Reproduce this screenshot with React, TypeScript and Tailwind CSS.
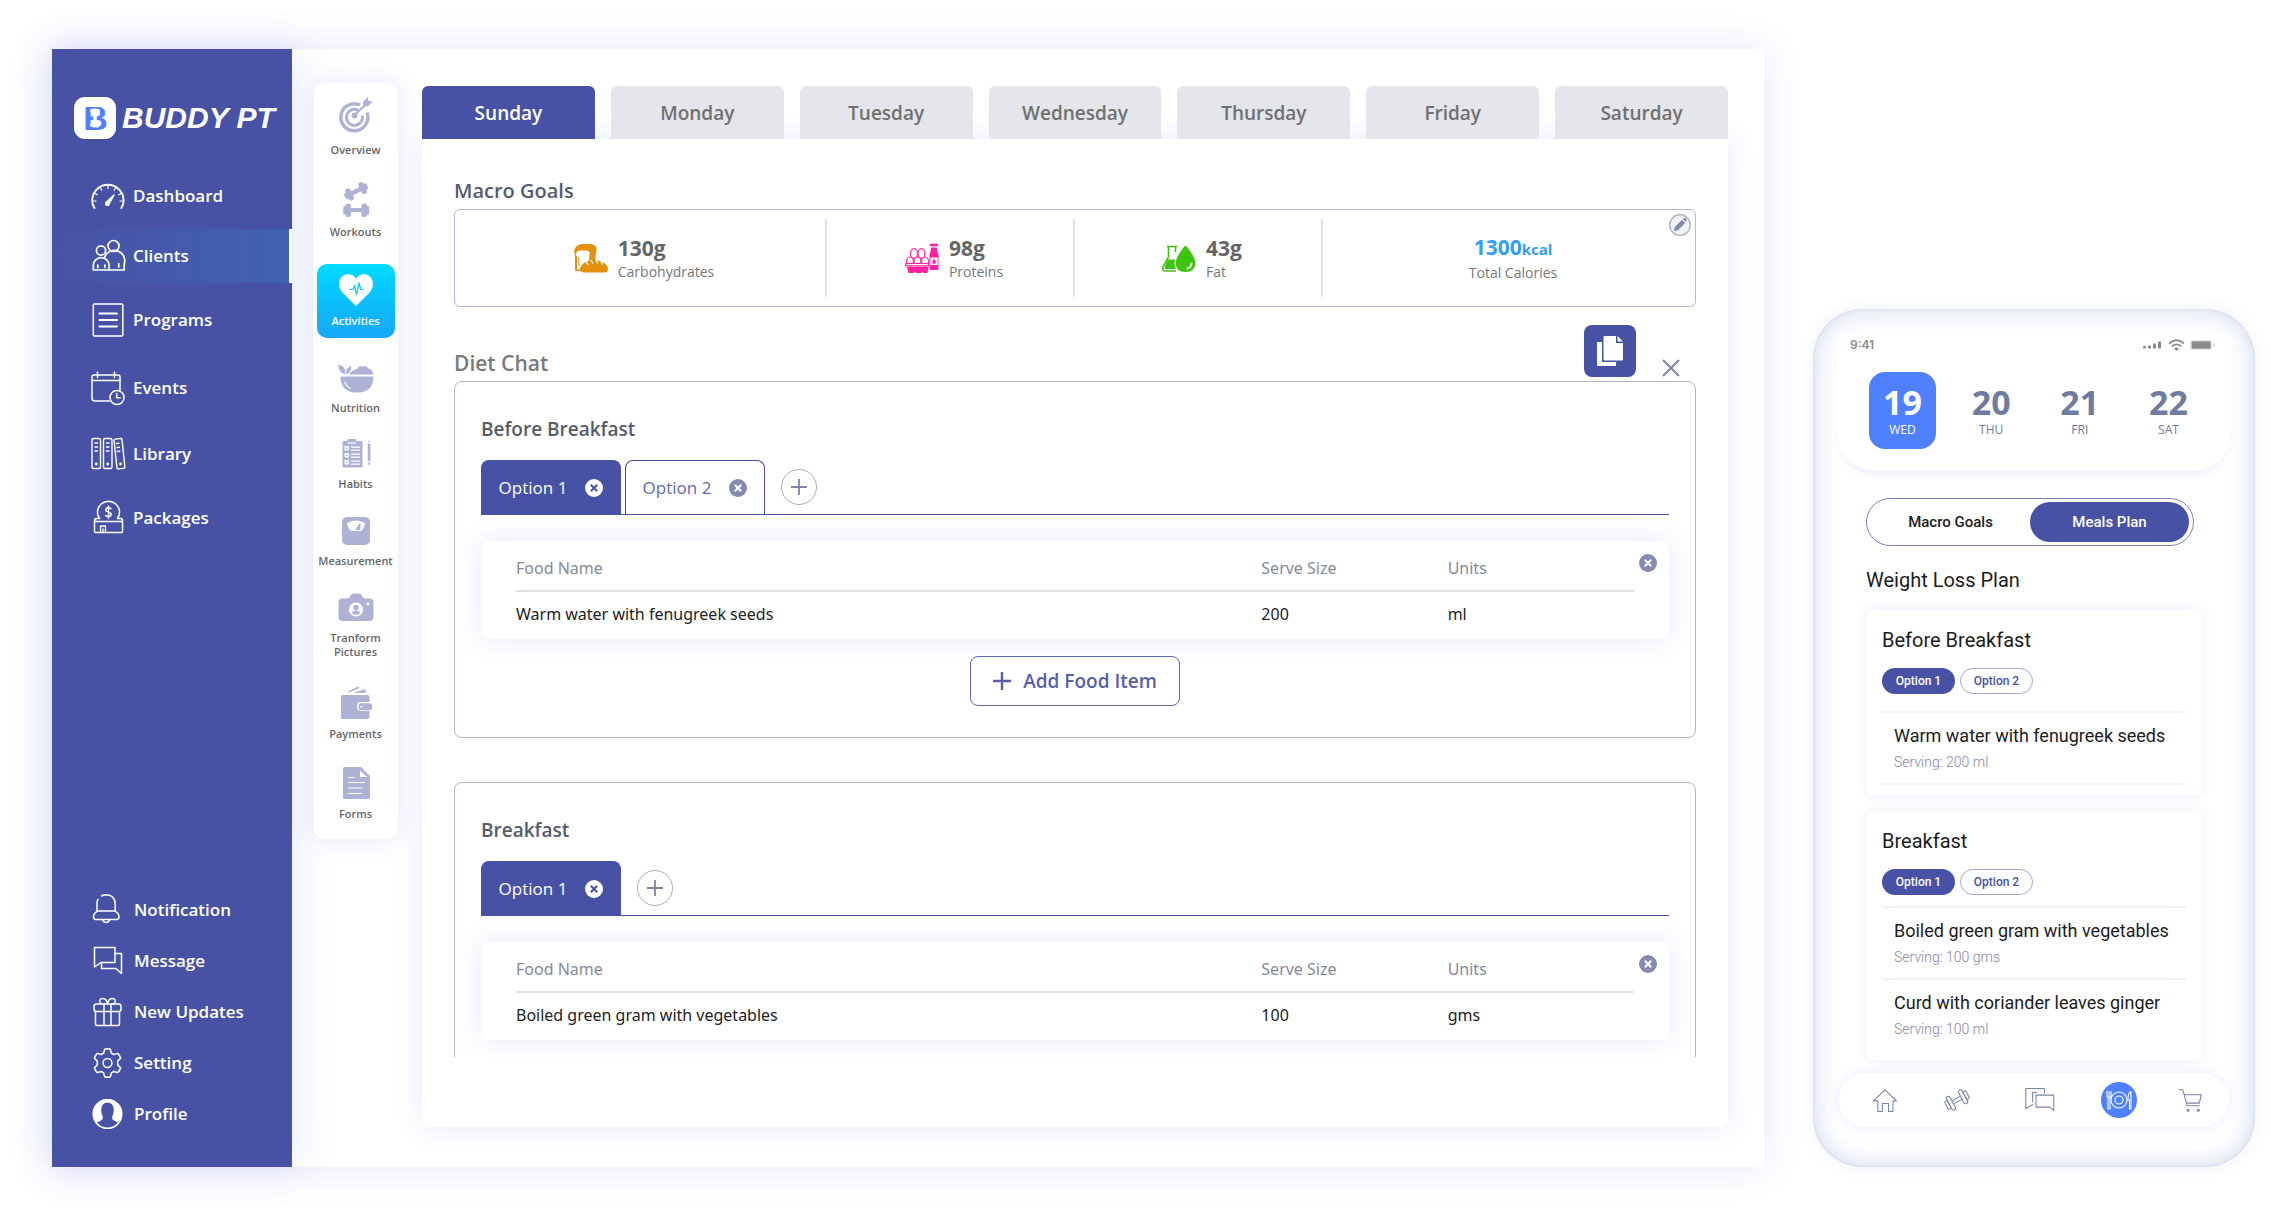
import type { ReactNode } from 'react'
import clsx from 'clsx'

interface IconProps {
  className?: string
}

interface NavItem {
  label: string
  icon: ReactNode
  spacing?: string
  active?: boolean
}

function LineIcon({ children, className = 'h-9 w-9' }: IconProps & { children: ReactNode }) {
  return (
    <svg
      viewBox="0 0 36 36"
      className={clsx('shrink-0', className)}
      fill="none"
      stroke="currentColor"
      strokeWidth="1.5"
      strokeLinecap="round"
      strokeLinejoin="round"
      aria-hidden="true"
    >
      {children}
    </svg>
  )
}

function SolidIcon({ children, className = 'h-9 w-9' }: IconProps & { children: ReactNode }) {
  return (
    <svg viewBox="0 0 36 36" className={clsx('shrink-0 overflow-visible', className)} fill="currentColor" aria-hidden="true">
      {children}
    </svg>
  )
}

function LogoMark() {
  return (
    <svg viewBox="0 0 42 42" className="h-[42px] w-[42px] shrink-0" aria-hidden="true">
      <rect width="42" height="42" rx="11" fill="#fff" />
      <text x="21.500" y="33" textAnchor="middle" className="fill-[#4f80ff] font-['Liberation_Sans',sans-serif] text-[34px] font-bold">
        B
      </text>
      <path
        d="M16 13.500q0-2 5-2t5 2q0 2.300-3.200 2.800v9.400q3.200.5 3.200 2.800t-5 2-5-2q0-2 3.200-2.800v-9.400q-3.200-.5-3.200-2.800z"
        fill="#fff"
      />
    </svg>
  )
}

const mainNav: NavItem[] = [
  {
    label: 'Dashboard',
    icon: (
      <LineIcon>
        <path d="M4.500 30q-2.300-3.500-2.300-7.500a15.700 15.700 0 0 1 31.400 0q0 4-2.300 7.500" strokeWidth="1.900" />
        <path d="M18 8v2.500M10.500 10l1.300 2.200M25.500 10l-1.300 2.200M5 15.500l2.200 1.300M31 15.500l-2.200 1.300M3.500 23H6M32.500 23H30" strokeWidth="1.200" />
        <path d="M16.300 24.200 24 17l-5 9z" fill="currentColor" />
        <circle cx="17.500" cy="25.500" r="1.800" fill="currentColor" />
      </LineIcon>
    ),
  },
  {
    label: 'Clients',
    spacing: 'mt-1.5',
    active: true,
    icon: (
      <LineIcon>
        <g strokeWidth="1.700">
          <circle cx="23.500" cy="8" r="5.500" />
          <circle cx="11" cy="12.500" r="4.600" />
          <path d="M3.300 32v-4.500a7.800 7.800 0 0 1 15.800 0V32z" />
          <path d="M14.500 19.500a10.200 10.200 0 0 1 19.700 6.500v6H19.100" />
          <path d="M7.800 27v2.500M15 27v2.500M28.700 25.500v3.500" />
        </g>
      </LineIcon>
    ),
  },
  {
    label: 'Programs',
    spacing: 'mt-2.5',
    icon: (
      <LineIcon>
        <rect x="3.300" y="2" width="29.500" height="32" rx="1" />
        <path d="M9.500 11.500h17.500M9.500 18h17.500M9.500 24.500h17.500" strokeWidth="1.900" />
      </LineIcon>
    ),
  },
  {
    label: 'Events',
    spacing: 'mt-3.5',
    icon: (
      <LineIcon>
        <path d="M19.500 31H5q-3 0-3-3V7q0-2 2-2h24q2 0 2 2v13" />
        <path d="M2 10.500h28M7.500 2v5.500M24.500 2v5.500" />
        <circle cx="27" cy="27.500" r="7" />
        <path d="M26.700 23.500v4.300h3.500" />
      </LineIcon>
    ),
  },
  {
    label: 'Library',
    spacing: 'mt-3',
    icon: (
      <LineIcon>
        <g strokeWidth="1.400">
          <rect x="2" y="2.500" width="8.500" height="30" rx="1.500" />
          <rect x="13.500" y="2.500" width="8.500" height="30" rx="1.500" />
          <rect x="25.500" y="2.800" width="8" height="30" rx="1.500" transform="rotate(-6 29 18)" />
          <path d="M5 7h2.500M5 11h2.500M5 15h2.500M16.500 7H19M16.500 11H19M16.500 15H19M26.500 7.500l2.500-.3M27 11.500l2.500-.3M27.300 15.500l2.500-.3" />
        </g>
        <circle cx="6.300" cy="28" r="1.400" fill="currentColor" stroke="none" />
        <circle cx="17.800" cy="28" r="1.400" fill="currentColor" stroke="none" />
        <circle cx="30.500" cy="28" r="1.400" fill="currentColor" stroke="none" />
      </LineIcon>
    ),
  },
  {
    label: 'Packages',
    spacing: 'mt-2.5',
    icon: (
      <LineIcon>
        <path d="M9.500 18.500a11 11 0 1 1 18 0" />
        <path d="M4.500 23v-2.500q0-2 2-2h2.500M32.500 23v-2.500q0-2-2-2H28M4.500 21.500h28v10q0 1-1 1h-26q-1 0-1-1z" />
        <path d="M10.500 32.500v-6.500h5v6.500M13 29v3" strokeWidth="1.300" />
        <path d="M21 8.700q-1-1-2.600-1-2.700.2-2.600 2.300.1 1.600 2.700 2.100 2.700.5 2.700 2.400 0 2-2.700 2.200-1.800 0-2.900-1.200M18.500 6v12.500" strokeWidth="1.400" />
      </LineIcon>
    ),
  },
]

const footerNav: NavItem[] = [
  {
    label: 'Notification',
    icon: (
      <LineIcon>
        <path d="M7 19v-8.500q.3-2 1-3.200M11.500 4q2-1.300 4.500-1.300 8.800.3 9.200 9V19" />
        <path d="M7.500 19h17.500l2.300 1.800q2 2.200 1.700 4.500-.4 2.200-2.500 2.200h-20.500q-2.100 0-2.500-2.200-.3-2.300 1.700-4.500zM12.500 28q1.200 2.600 3.600 2.600t3.600-2.600" />
      </LineIcon>
    ),
  },
  {
    label: 'Message',
    icon: (
      <LineIcon>
        <path d="M4.500 4.500h20.500v15H11L4.500 24z" />
        <path d="M25 10.500h6.500v20l-5.500-5H11.500V20" />
      </LineIcon>
    ),
  },
  {
    label: 'New Updates',
    icon: (
      <LineIcon>
        <rect x="4" y="10" width="27" height="7.500" rx="2.500" />
        <path d="M5.500 17.500V30q0 1.500 1.500 1.500h21q1.500 0 1.500-1.500V17.500M14 10v21.500M21 10v21.500" />
        <path d="M17.500 10q-1-5.800-5-5.500-3.500.5-2.700 3.500.5 1.500 2.200 2M17.500 10q1-5.800 5-5.500 3.500.5 2.700 3.500-.5 1.500-2.200 2" />
      </LineIcon>
    ),
  },
  {
    label: 'Setting',
    icon: (
      <LineIcon>
        <circle cx="17.500" cy="18" r="4.400" />
        <path d="M14.700 4.200q2.800-1 5.600 0l1.100 4 2.300 1.300 4-1.100q2.200 1.900 2.900 4.800l-2.900 2.900v3.800l2.900 2.900q-.7 2.900-2.900 4.800l-4-1.100-2.300 1.300-1.100 4q-2.800 1-5.600 0l-1.100-4-2.300-1.300-4 1.100q-2.200-1.900-2.900-4.800l2.900-2.900v-3.800l-2.900-2.900q.7-2.900 2.900-4.800l4 1.100 2.300-1.300z" />
      </LineIcon>
    ),
  },
  {
    label: 'Profile',
    icon: (
      <LineIcon>
        <circle cx="17.500" cy="18" r="14.300" />
        <path
          d="M6.500 26.500q5-1.800 6-3.200.7-1.500-.2-4-1.300-3-1-6.300.6-6.500 6.200-6.500t6.200 6.500q.3 3.300-1 6.300-.9 2.500-.2 4 1 1.400 6 3.200A14.300 14.300 0 1 0 6.500 26.500z"
          fill="currentColor"
          stroke="none"
        />
      </LineIcon>
    ),
  },
]

const railNav: NavItem[] = [
  {
    label: 'Overview',
    icon: (
      <SolidIcon>
        <g fill="none" stroke="currentColor">
          <path d="M22 4a13.500 13.500 0 1 0 7 7.500" strokeWidth="3.400" />
          <path d="M20.500 9.500a8 8 0 1 0 3.700 5" strokeWidth="3" />
          <path d="m16 14.500 14-13" strokeWidth="2" />
        </g>
        <circle cx="16.500" cy="14.500" r="3" />
        <path d="m25 1 4.500-5 1 3.800 4.200 1-5 4.700-4.200-.7z" />
      </SolidIcon>
    ),
  },
  {
    label: 'Workouts',
    spacing: 'mt-[26px]',
    icon: (
      <SolidIcon>
        <g transform="rotate(-26 18 8)">
          <rect x="10" y="6" width="16" height="4.500" />
          <rect x="8" y="2" width="5.500" height="12.500" rx="2.500" />
          <rect x="22.500" y="2" width="5.500" height="12.500" rx="2.500" />
          <rect x="5.500" y="5" width="4" height="6.500" rx="1.500" />
          <rect x="26.500" y="5" width="4" height="6.500" rx="1.500" />
        </g>
        <rect x="12" y="25" width="13" height="4" />
        <rect x="7.500" y="20.500" width="5.500" height="13.500" rx="2.500" />
        <rect x="23.500" y="20.500" width="5.500" height="13.500" rx="2.500" />
        <rect x="5.200" y="23" width="4" height="8.500" rx="1.500" />
        <rect x="27.200" y="23" width="4" height="8.500" rx="1.500" />
      </SolidIcon>
    ),
  },
  {
    label: 'Activities',
    spacing: 'mt-[25px]',
    active: true,
    icon: (
      <SolidIcon>
        <path d="M18 34 4.500 20.500C-1 14 .5 6.500 5.500 3.500 10 1 15.500 2.500 18 6.500 20.500 2.500 26 1 30.500 3.500c5 3 6.500 10.500 1 17z" />
        <path d="M11 17.500h4l1.500-3.500 2 8.500 2.500-11 2 6h2.500" fill="none" stroke="#0cc3fb" strokeWidth="1.200" />
      </SolidIcon>
    ),
  },
  {
    label: 'Nutrition',
    spacing: 'mt-[21px]',
    icon: (
      <SolidIcon>
        <path d="M2.500 17.500h33q0 14-13 16h-7q-13-2-13-16z" />
        <path d="M11 15.500q2.500-4.500 8-5.500 2.500-4.500 5.500-2.500 5-.8 5.500 2 4.500.5 5.500 6z" />
        <path d="M.5 5.500q6 1.500 6.500 5.500l.5 4.500Q0 14 .5 5.500zM13 7q.5 7.500-5 8-1-5.500 5-8z" />
        <path d="M6.500 23q2 4.500 6 6.700" fill="none" stroke="#fff" strokeWidth="1.200" />
      </SolidIcon>
    ),
  },
  {
    label: 'Habits',
    spacing: 'mt-5',
    icon: (
      <SolidIcon>
        <path d="M5.500 6h4V4.500q0-.5.500-.5h7.500q.5 0 .5.500V6h5.500q1 0 1 1v24.500q0 1-1 1h-18q-1 0-1-1V7q0-1 1-1z" />
        <path d="M9.500 8h8.500" stroke="#fff" strokeWidth="1.200" />
        <g fill="#fff">
          <path d="M6.500 11h4.500v4.500H6.500zM6.500 18h4.500v4.500H6.500zM6.500 25h4.500v4.500H6.500z" />
          <path d="M13 11.500h9v1.300h-9zM13 14.500h9v1.300h-9zM13 18.500h9v1.300h-9zM13 21.500h9v1.300h-9zM13 25.500h9v1.300h-9zM13 28.500h9v1.300h-9z" />
        </g>
        <path d="M8 12.500h1.500V14H8zM8 19.500h1.500V21H8zM8 26.500h1.500V28H8z" />
        <path d="m31 5 1 2h-2zM29.700 8.500h2.700v17.500h-2.700zM29.700 27.500h2.700L31 31z" />
      </SolidIcon>
    ),
  },
  {
    label: 'Measurement',
    spacing: 'mt-[21px]',
    icon: (
      <SolidIcon>
        <rect x="4" y="5" width="28" height="28" rx="5" />
        <path d="M9 11q9-5 18 0-1 6.500-4.500 8h-9q-3.500-1.500-4.500-8z" fill="#fff" />
        <path d="m18.500 17.500 3.500-6-.5 6z" stroke="currentColor" strokeWidth="1.300" />
      </SolidIcon>
    ),
  },
  {
    label: 'Tranform Pictures',
    spacing: 'mt-[21px]',
    icon: (
      <SolidIcon>
        <path d="M4 9.500h5.500q2-.3 2.700-2 .8-3 3.800-3h4.500q3 0 3.800 3 .7 1.700 2.700 2h4.500q4 0 4 4V28q0 4-4 4H4.500q-4 0-4-4V13q0-3.500 3.500-3.500z" />
        <circle cx="18" cy="20.500" r="7" fill="#fff" />
        <circle cx="18" cy="18.500" r="2.700" />
        <path d="M14 24.500q0-3 4-3t4 3q-4 2.500-8 0z" />
        <circle cx="30" cy="15" r="1.400" fill="#fff" />
      </SolidIcon>
    ),
  },
  {
    label: 'Payments',
    spacing: 'mt-[26px]',
    icon: (
      <SolidIcon>
        <path d="M4.500 10h25q2 0 2 2v5h-9q-3.500 0-3.500 4.500t3.500 4.500h9v6q0 2-2 2h-25q-1.500 0-1.500-1.500v-21Q3 10 4.500 10z" />
        <rect x="20.500" y="18.200" width="13.500" height="7" rx="2.500" />
        <circle cx="23.500" cy="21.700" r="1" fill="#fff" />
        <path d="m9 7 11-5.500 1.500 1.500L12 7zM15 8l12-4 1 4z" />
      </SolidIcon>
    ),
  },
  {
    label: 'Forms',
    spacing: 'mt-6',
    icon: (
      <SolidIcon>
        <path d="M6.500 2H23l9 9v21.500q0 1.500-1.500 1.500h-24Q5 34 5 32.500v-29Q5 2 6.500 2z" />
        <path d="M22 5.500V12h7z" fill="#fff" />
        <path d="M10 12.500h6.500M10 17.500h17M10 23h14.500M10 28.500h14" stroke="#fff" strokeWidth="1.200" />
      </SolidIcon>
    ),
  },
]

const days = ['Sunday', 'Monday', 'Tuesday', 'Wednesday', 'Thursday', 'Friday', 'Saturday']

const macros = [
  {
    amount: '130g',
    label: 'Carbohydrates',
    width: 'w-[30%]',
    icon: (
      <svg viewBox="0 0 34 30" className="h-[30px] w-[34px]" fill="#e0920f" aria-hidden="true">
        <path d="M8 1h8.500q6.500.5 6 6.500-.2 3-1 4.500V22H6v6H2.500Q1 28 1 26.500V12Q-.8 8 1.500 4.500 4 1 8 1z" />
        <path d="M6.500 7.500h6q4 .5 3 4.500l-.5 6.500q-6 1.500-8 8H3V13.500q-1.300-1-.7-3.500.7-2.500 4.200-2.500z" fill="#fff" />
        <path d="M4.800 14v9" stroke="#e0920f" strokeWidth="1" />
        <path d="M6 25q2-5 8.500-7 7-1.800 12.500.5 7 3 7 7.500 0 3.500-4 3.500H10q-5-.5-4-4.500z" />
        <path d="m12 18.500 2 3.500M17 17l2 3.500M22 17l2 3.500M27 18.500l1.500 3" stroke="#fff" strokeWidth="1.300" fill="none" />
      </svg>
    ),
  },
  {
    amount: '98g',
    label: 'Proteins',
    width: 'w-[20%]',
    icon: (
      <svg viewBox="0 0 34 30" className="h-[30px] w-[34px]" fill="#ff1fa0" aria-hidden="true">
        <g fill="#fff" stroke="#ff1fa0" strokeWidth="1.200">
          <ellipse cx="9" cy="10.500" rx="3.500" ry="4.800" />
          <ellipse cx="16.500" cy="10.500" rx="3.500" ry="4.800" />
          <ellipse cx="5" cy="18.500" rx="3.500" ry="4.500" />
          <ellipse cx="12.500" cy="18.500" rx="3.500" ry="4.500" />
          <ellipse cx="20" cy="18.500" rx="3.500" ry="4.500" />
          <path d="M.8 20.500h22.500v2.300H.8z" />
        </g>
        <path d="M2 24h21.500l-1 6h-4l-1-1.500-1.500 1.500h-5L10 28.500 8.500 30h-5z" />
        <path d="M25 .8h8v2.500h-8zM26 4.500h6q-.3 4 1.500 6.500V26q0 1-1 1h-7q-1 0-1-1V11q1.800-2.500 1.500-6.500z" />
        <rect x="25.300" y="14.500" width="7.400" height="7.500" fill="#fff" />
        <path d="M29 15.500q3.500 5 0 5.500-3.500-.5 0-5.500z" />
      </svg>
    ),
  },
  {
    amount: '43g',
    label: 'Fat',
    width: 'w-[20%]',
    icon: (
      <svg viewBox="0 0 34 30" className="h-[30px] w-[34px]" fill="#3ec40d" aria-hidden="true">
        <path d="M5 3.500h10M6.500 4v10L1 24q-.8 4 2 4h11M13.500 4v5" fill="none" stroke="#3ec40d" strokeWidth="1.600" />
        <path d="M6 16.500h7l3 9.500H4q-2 0-1-3z" />
        <path d="M23.500 1Q13 13.500 13 20.500q.5 9 10.500 9t10.500-9Q34 13.500 23.500 1z" stroke="#fff" strokeWidth="1.200" />
        <path d="M29.500 20.500q-.3 4-4 5" fill="none" stroke="#fff" strokeWidth="2" strokeLinecap="round" />
      </svg>
    ),
  },
]

interface Meal {
  title: string
  options: string[]
  food: string
  size: string
  unit: string
  canAdd?: boolean
}

const meals: Meal[] = [
  {
    title: 'Before Breakfast',
    options: ['Option 1', 'Option 2'],
    food: 'Warm water with fenugreek seeds',
    size: '200',
    unit: 'ml',
    canAdd: true,
  },
  { title: 'Breakfast', options: ['Option 1'], food: 'Boiled green gram with vegetables', size: '100', unit: 'gms' },
]

const phoneMeals = [
  {
    title: 'Before Breakfast',
    chips: 'mb-[17px]',
    list: 'border-b-2',
    items: [['Warm water with fenugreek seeds', '200 ml']],
  },
  {
    title: 'Breakfast',
    chips: 'mb-[11px]',
    list: '',
    items: [
      ['Boiled green gram with vegetables', '100 gms'],
      ['Curd with coriander leaves ginger', '100 ml'],
    ],
  },
]

const dates = [
  ['19', 'WED'],
  ['20', 'THU'],
  ['21', 'FRI'],
  ['22', 'SAT'],
]

function CircleX({ active }: { active?: boolean }) {
  return (
    <svg viewBox="0 0 18 18" className="h-[18px] w-[18px]" aria-hidden="true">
      <circle cx="9" cy="9" r="9" fill={active ? '#fff' : '#858bb0'} />
      <path d="m5.800 5.800 6.400 6.400M12.200 5.800l-6.400 6.400" stroke={active ? '#4852a4' : '#fff'} strokeWidth="2" />
    </svg>
  )
}

function Sidebar() {
  return (
    <aside className="flex w-60 shrink-0 flex-col bg-[#4852a4] pt-12 pb-7 text-[17px] font-semibold text-white shadow-[0_0_40px_rgba(72,82,200,0.15)]">
      <a href="#home" className="flex items-center gap-1.5 pl-[22px]">
        <LogoMark />
        <span className="font-['Liberation_Sans',sans-serif] text-[30px] leading-none font-bold whitespace-nowrap italic">BUDDY PT</span>
      </a>
      <nav className="mt-[30px]">
        {mainNav.map((item) => (
          <a
            key={item.label}
            href="#nav"
            className={clsx(
              'flex h-[54px] items-center gap-[7px] pl-[38px]',
              item.spacing,
              item.active && 'border-r-[3px] border-white bg-linear-to-r from-[#4852a4] to-[#4162b3]',
            )}
          >
            {item.icon}
            {item.label}
          </a>
        ))}
      </nav>
      <nav className="mt-auto">
        {footerNav.map((item) => (
          <a key={item.label} href="#nav" className="flex h-[51px] items-center gap-2 pl-[38px]">
            {item.icon}
            {item.label}
          </a>
        ))}
      </nav>
    </aside>
  )
}

function Rail() {
  return (
    <nav className="mt-[34px] ml-[21px] flex w-[85px] shrink-0 flex-col items-center self-start rounded-xl bg-white pt-[18px] pb-[18px] shadow-[0_0_24px_rgba(72,82,220,0.14)]">
      {railNav.map((item) => (
        <a
          key={item.label}
          href="#section"
          className={clsx(
            'flex w-[78px] flex-col items-center gap-1.5 text-center text-[11px] leading-[14px] font-semibold',
            item.spacing,
            item.active ? 'rounded-[10px] bg-linear-to-b from-[#00dbff] to-[#17a6f8] pt-2 pb-2.5 text-white' : 'text-[#666]',
          )}
        >
          <span className={item.active ? 'text-white' : 'text-[#aeb3d6]'}>{item.icon}</span>
          {item.label}
        </a>
      ))}
    </nav>
  )
}

function MacroGoals() {
  return (
    <section>
      <h2 className="text-xl leading-7 font-semibold text-[#555c6b]">Macro Goals</h2>
      <div className="relative mt-1 flex h-[98px] items-center rounded-md border border-[#b3b8d8]">
        {macros.map((macro) => (
          <div key={macro.label} className={clsx('flex h-[78px] items-center justify-center gap-2.5 border-r-2 border-[#e3e4ea] pl-2', macro.width)}>
            {macro.icon}
            <div className="pt-1">
              <p className="text-[21px] leading-6 font-bold text-[#666]">{macro.amount}</p>
              <p className="text-sm leading-6 text-[#777]">{macro.label}</p>
            </div>
          </div>
        ))}
        <div className="flex-1 pt-1 pl-2 text-center">
          <p className="text-[21px] leading-6 font-bold text-[#339ef6]">
            1300<span className="text-[15px]">kcal</span>
          </p>
          <p className="text-sm leading-6 text-[#777]">Total Calories</p>
        </div>
        <button className="absolute top-1 right-1 cursor-pointer" aria-label="Edit macro goals">
          <svg viewBox="0 0 22 22" className="h-[22px] w-[22px]" aria-hidden="true">
            <circle cx="11" cy="11" r="10.300" fill="#f1f2f6" stroke="#a9acb8" strokeWidth="1.200" />
            <path d="m5 17 .8-4L13 5.800l3.200 3.200L9 16.200zM13.800 5l1.200-1.200q1-.5 2 .5t.5 2L16.900 8z" fill="#8489ae" />
          </svg>
        </button>
      </div>
    </section>
  )
}

function MealCard({ meal }: { meal: Meal }) {
  return (
    <section className="rounded-lg border border-[#b2b6c4] px-[26px] pt-[33px] pb-[31px]">
      <h3 className="text-[19px] leading-7 font-semibold text-[#555c6b]">{meal.title}</h3>
      <div className="mt-[17px] flex gap-1 border-b border-[#4852a4] text-[17px]">
        {meal.options.map((option, i) => (
          <div
            key={option}
            className={clsx(
              'flex h-[54px] w-[140px] items-center justify-center gap-[18px] rounded-t-lg border border-b-0 border-[#4852a4]',
              i === 0 ? 'bg-[#4852a4] text-white' : 'bg-white text-[#5f69b3]',
            )}
          >
            <button className="cursor-pointer">{option}</button>
            <button className="cursor-pointer" aria-label={`Remove ${option}`}>
              <CircleX active={i === 0} />
            </button>
          </div>
        ))}
        <button
          className="ml-3 flex h-9 w-9 cursor-pointer items-center justify-center self-center rounded-full border border-[#a9acbc] text-[#7d84aa]"
          aria-label="Add option"
        >
          <svg viewBox="0 0 16 16" className="h-4 w-4" stroke="currentColor" strokeWidth="1.800" aria-hidden="true">
            <path d="M8 0v16M0 8h16" />
          </svg>
        </button>
      </div>
      <div className="relative mt-[26px] rounded-lg bg-white px-[35px] py-1 shadow-[0_0_26px_rgba(72,82,220,0.13)]">
        <table className="w-full table-fixed text-left font-['Noto_Sans',sans-serif] text-base">
          <thead>
            <tr className="h-[46px] border-b-2 border-[#e0e1e8] text-[#858a98]">
              <th className="w-2/3 font-normal">Food Name</th>
              <th className="w-1/6 font-normal">Serve Size</th>
              <th className="w-1/6 font-normal">Units</th>
            </tr>
          </thead>
          <tbody>
            <tr className="h-11 text-[#222]">
              <td>{meal.food}</td>
              <td>{meal.size}</td>
              <td>{meal.unit}</td>
            </tr>
          </tbody>
        </table>
        <button className="absolute top-[13px] right-3 cursor-pointer" aria-label="Remove food">
          <CircleX />
        </button>
      </div>
      {meal.canAdd && (
        <button className="mx-auto mt-[17px] flex h-[50px] w-[210px] cursor-pointer items-center justify-center gap-3 rounded-lg border border-[#6068b4] bg-white text-[19px] font-semibold text-[#5660ab]">
          <svg viewBox="0 0 18 18" className="h-[18px] w-[18px]" stroke="currentColor" strokeWidth="2.400" aria-hidden="true">
            <path d="M9 0v18M0 9h18" />
          </svg>
          Add Food Item
        </button>
      )}
    </section>
  )
}

function DietPlanner() {
  return (
    <main className="mt-[37px] mr-9 mb-10 ml-6 flex min-w-0 flex-1 flex-col">
      <div className="relative grid grid-cols-7 gap-4">
        {days.map((day, i) => (
          <button
            key={day}
            className={clsx(
              'h-[53px] cursor-pointer rounded-t-md pt-0.5 text-[19px] font-semibold',
              i === 0 ? 'bg-[#4852a4] text-white' : 'bg-[#e5e6eb] text-[#707070]',
            )}
          >
            {day}
          </button>
        ))}
      </div>
      <div className="flex min-h-0 flex-1 flex-col rounded-b-lg bg-white px-8 pt-[38px] pb-[70px] shadow-[0_0_28px_rgba(72,82,220,0.13)]">
        <MacroGoals />
        <div className="mt-[18px] flex items-end justify-between">
          <h2 className="pb-1 text-[21px] leading-7 font-semibold text-[#7a7a7a]">Diet Chat</h2>
          <div className="mr-4 mb-1 flex items-end gap-[26px]">
            <button className="flex h-[52px] w-[52px] cursor-pointer items-center justify-center rounded-lg bg-[#4852a4]" aria-label="Copy diet">
              <svg viewBox="0 0 28 32" className="h-8 w-7" fill="#fff" aria-hidden="true">
                <path d="M1 7h5v20h14v4H2q-1 0-1-1z" />
                <path d="M8.500 1H20v7h7v16.500q0 1-1 1H8.500q-1 0-1-1V2q0-1 1-1zM21.500 1 27 6.500h-5.500z" />
              </svg>
            </button>
            <button className="cursor-pointer" aria-label="Close diet">
              <svg viewBox="0 0 18 18" className="h-[18px] w-[18px]" stroke="#8289ae" strokeWidth="2.200" aria-hidden="true">
                <path d="m1 1 16 16M17 1 1 17" />
              </svg>
            </button>
          </div>
        </div>
        <div className="flex min-h-0 flex-1 flex-col gap-11 overflow-y-auto [scrollbar-width:none] *:shrink-0">
          {meals.map((meal) => (
            <MealCard key={meal.title} meal={meal} />
          ))}
        </div>
      </div>
    </main>
  )
}

function StatusBar() {
  return (
    <div className="flex items-center justify-between pr-4 pl-[13px] text-[#8c8c8c]">
      <span className="font-['Inter',sans-serif] text-xs leading-4 font-semibold">9:41</span>
      <svg viewBox="0 0 72 14" className="h-3.5 w-[72px]" fill="currentColor" aria-hidden="true">
        <rect x="0" y="8" width="3" height="2.500" rx="1" />
        <rect x="5" y="7.500" width="3" height="3" rx=".5" />
        <rect x="10" y="5.500" width="3" height="5" rx=".5" />
        <rect x="15" y="3.500" width="3" height="7" rx=".5" />
        <g fill="none" stroke="currentColor" strokeWidth="1.700">
          <path d="M26 5.500q7.500-6.500 15 0M28.700 8.300q4.800-4 9.600 0" />
        </g>
        <path d="M31 10.500q2.500-2 5 0L33.500 13z" />
        <rect x="47.500" y="2.500" width="21" height="9" rx="2" fill="#c9c9c9" />
        <rect x="49" y="3.500" width="18.500" height="7" rx="1" />
        <rect x="70" y="5.500" width="1.300" height="3" fill="#c9c9c9" />
      </svg>
    </div>
  )
}

function PhoneNav() {
  return (
    <nav className="mx-0.5 mt-[13px] flex h-[54px] items-center rounded-full bg-white pl-[30px] text-[#7985a8] shadow-[0_0_12px_rgba(72,100,230,0.13)]">
      <a href="#home" aria-label="Home">
        <LineIcon className="h-8 w-8">
          <path d="M5 19 18 6.500 31 19h-4v12h-5v-9h-7v9h-5V19z" strokeWidth="1.200" />
        </LineIcon>
      </a>
      <a href="#workouts" aria-label="Workouts" className="ml-10">
        <LineIcon className="h-8 w-8">
          <g transform="rotate(-28 18 18)" strokeWidth="1.200">
            <rect x="8" y="9.500" width="4.500" height="17" rx="2.200" />
            <rect x="23.500" y="9.500" width="4.500" height="17" rx="2.200" />
            <rect x="4.500" y="13" width="3.500" height="10" rx="1.700" />
            <rect x="28" y="13" width="3.500" height="10" rx="1.700" />
            <path d="M12.500 16h11M12.500 20h11" />
          </g>
        </LineIcon>
      </a>
      <a href="#chat" aria-label="Chat" className="ml-[51px]">
        <LineIcon className="h-8 w-8">
          <path d="M10 23 2 27.500V5h21v5M14 9.500H9.500V20" strokeWidth="1.200" />
          <path d="M13.500 12.500h20v17.500l-4.500-4H13.500z" strokeWidth="1.200" />
        </LineIcon>
      </a>
      <a href="#meals" aria-label="Meals" className="ml-[45px] rounded-full bg-[#4f80ff] text-white">
        <LineIcon>
          <g strokeWidth="1.100">
            <circle cx="18" cy="18" r="8" />
            <circle cx="18" cy="18" r="4" />
            <path d="M6 9.500v5.500h4V9.500M8 9.500V15M7 15v12h2V15M30 9.500q-3 1-3 8.500h1.500v9H30z" />
          </g>
        </LineIcon>
      </a>
      <a href="#cart" aria-label="Cart" className="ml-9">
        <LineIcon className="h-8 w-8">
          <path d="M7 6.500h4l5 18h14M12.500 12H32l-2.500 9.500H15" strokeWidth="1.200" />
          <circle cx="17" cy="29.500" r="1" />
          <circle cx="28.500" cy="29.500" r="1" />
        </LineIcon>
      </a>
    </nav>
  )
}

function Phone() {
  return (
    <div className="w-[442px] shrink-0 self-end rounded-[50px] bg-white px-6 pt-7 pb-10 font-['Roboto',sans-serif] shadow-[inset_0_0_26px_#ccd5ec,inset_0_0_3px_#c3cee8,0_0_16px_rgba(72,82,220,0.08)]">
      <header className="rounded-b-[38px] bg-white pb-[22px] shadow-[0_6px_8px_-4px_rgba(72,100,230,0.14)]">
        <StatusBar />
        <div className="mt-[19px] flex justify-between pr-[29px] pl-8">
          {dates.map(([date, weekday], i) => (
            <button
              key={date}
              className={clsx(
                'flex h-[77px] w-[67px] cursor-pointer flex-col items-center rounded-2xl pt-2.5',
                i === 0 ? 'bg-[#4f80ff] text-white' : 'text-[#6f7ca0]',
              )}
            >
              <span className="font-['Open_Sans',sans-serif] text-[34px] leading-10 font-bold">{date}</span>
              <span className="font-['Open_Sans',sans-serif] text-xs leading-4">{weekday}</span>
            </button>
          ))}
        </div>
      </header>
      <div className="px-[29px]">
        <div className="mt-[27px] mr-2 flex h-12 items-center rounded-full border border-[#7a83c0] p-1 text-[15px] font-medium">
          <button className="flex-1 cursor-pointer text-[#222]">Macro Goals</button>
          <button className="h-10 flex-1 cursor-pointer rounded-full bg-[#4852a4] text-white">Meals Plan</button>
        </div>
        <h2 className="mt-5 text-xl leading-7 text-[#1c1c1c]">Weight Loss Plan</h2>
        <div className="mt-4 flex flex-col gap-4">
          {phoneMeals.map((meal) => (
            <section key={meal.title} className="rounded-md bg-white px-4 pt-4 pb-2.5 shadow-[0_0_12px_rgba(72,100,230,0.11)]">
              <h3 className="text-xl leading-7 text-[#1c1c1c]">{meal.title}</h3>
              <div className={clsx('mt-3.5 flex gap-[5px] text-xs font-medium', meal.chips)}>
                <button className="h-[26px] w-[73px] cursor-pointer rounded-full bg-[#4852a4] text-white">Option 1</button>
                <button className="h-[26px] w-[73px] cursor-pointer rounded-full border border-[#a3a9d5] text-[#4852a4]">Option 2</button>
              </div>
              <ul className={clsx('border-[#eff1fb]', meal.list)}>
                {meal.items.map(([name, serving]) => (
                  <li key={name} className="border-t-2 border-[#eff1fb] px-3 pt-[9px] pb-[9px]">
                    <p className="text-lg leading-7 text-[#1c1c1c]">{name}</p>
                    <p className="text-sm leading-6 font-light text-[#85869f]">Serving: {serving}</p>
                  </li>
                ))}
              </ul>
            </section>
          ))}
        </div>
      </div>
      <PhoneNav />
    </div>
  )
}

export default function App() {
  return (
    <div className="flex h-screen min-h-[1223px] gap-[49px] bg-white pt-[49px] pr-4 pb-14 pl-[52px] font-['Open_Sans','Noto_Sans',sans-serif]">
      <div className="flex min-w-0 flex-1 bg-white shadow-[0_0_36px_rgba(72,82,220,0.14)]">
        <Sidebar />
        <Rail />
        <DietPlanner />
      </div>
      <Phone />
    </div>
  )
}
